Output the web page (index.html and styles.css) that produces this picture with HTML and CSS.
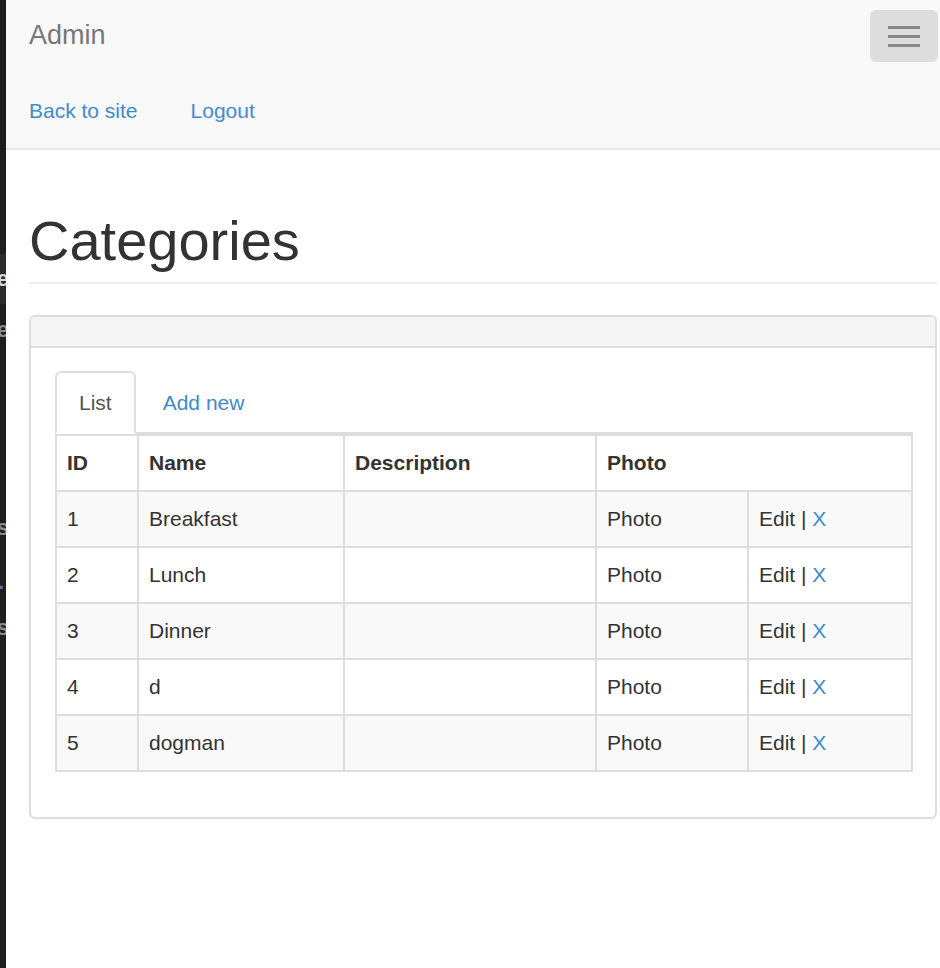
FILE: index.html
```html
<!DOCTYPE html>
<html lang="en">
<head>
<meta charset="utf-8">
<title>Admin - Categories</title>
<link rel="stylesheet" href="styles.css">
</head>
<body>
<div class="strip">
  <div class="strip-band"><span class="strip-char strip-char-light">re</span></div>
  <span class="strip-char strip-e2">re</span>
  <span class="strip-char strip-s1">es</span>
  <span class="strip-char strip-dot">.</span>
  <span class="strip-char strip-s2">es</span>
</div>
<div class="main">
  <nav class="navbar">
    <div class="navbar-header">
      <a class="brand" href="#">Admin</a>
      <button class="toggle" type="button" aria-label="Toggle navigation">
        <span class="bar"></span>
        <span class="bar"></span>
        <span class="bar"></span>
      </button>
    </div>
    <ul class="nav-links">
      <li><a href="#">Back to site</a></li>
      <li><a href="#">Logout</a></li>
    </ul>
  </nav>

  <div class="content">
    <h1 class="page-header">Categories</h1>

    <div class="panel">
      <div class="panel-heading"></div>
      <div class="panel-body">
        <ul class="tabs">
          <li class="active"><a href="#">List</a></li>
          <li><a href="#">Add new</a></li>
        </ul>
        <table class="grid">
          <colgroup>
            <col class="c-id">
            <col class="c-name">
            <col class="c-desc">
            <col class="c-photo">
            <col class="c-act">
          </colgroup>
          <thead>
            <tr><th>ID</th><th>Name</th><th>Description</th><th colspan="2">Photo</th></tr>
          </thead>
          <tbody>
            <tr><td>1</td><td>Breakfast</td><td></td><td>Photo</td><td>Edit | <a href="#">X</a></td></tr>
            <tr><td>2</td><td>Lunch</td><td></td><td>Photo</td><td>Edit | <a href="#">X</a></td></tr>
            <tr><td>3</td><td>Dinner</td><td></td><td>Photo</td><td>Edit | <a href="#">X</a></td></tr>
            <tr><td>4</td><td>d</td><td></td><td>Photo</td><td>Edit | <a href="#">X</a></td></tr>
            <tr><td>5</td><td>dogman</td><td></td><td>Photo</td><td>Edit | <a href="#">X</a></td></tr>
          </tbody>
        </table>
      </div>
    </div>
  </div>
</div>
</body>
</html>
```

FILE: styles.css
```css
* { box-sizing: border-box; }

html, body {
  margin: 0;
  padding: 0;
}

body {
  display: flex;
  min-height: 968px;
  font-family: "Liberation Sans", Arial, Helvetica, sans-serif;
  color: #333;
  background: #fff;
}

/* dark strip of a neighbouring window on the far left */
.strip {
  flex: none;
  width: 6px;
  background: #1e1e1e;
  overflow: hidden;
  display: flex;
  flex-direction: column;
  align-items: flex-end;
}

.strip-band {
  margin-top: 254px;
  width: 6px;
  height: 50px;
  background: #2c2c2c;
  display: flex;
  align-items: center;
  justify-content: flex-end;
  overflow: hidden;
}

.strip-char {
  flex: none;
  font-size: 22px;
  line-height: 24px;
  font-weight: bold;
  color: #8a8a8a;
  white-space: nowrap;
  margin-right: -3px;
}

.strip-char-light { color: #d8d8d8; }

.strip-e2 { margin-top: 14px; }
.strip-s1 { margin-top: 174px; }
.strip-dot { margin-top: 30px; color: #5a78a8; margin-right: 2px; }
.strip-s2 { margin-top: 22px; }

.main {
  flex: 1;
  min-width: 0;
}

/* navbar */
.navbar {
  background: #f8f8f8;
  border-bottom: 2px solid #e7e7e7;
}

.navbar-header {
  display: flex;
  justify-content: space-between;
  align-items: flex-start;
  height: 75px;
  padding-left: 23px;
  padding-right: 2px;
}

.brand {
  padding-top: 20px;
  font-size: 27px;
  line-height: 30px;
  color: #777;
  text-decoration: none;
}

.toggle {
  margin-top: 10px;
  width: 68px;
  height: 52px;
  padding: 0;
  border: none;
  border-radius: 6px;
  background: #ddd;
  display: flex;
  flex-direction: column;
  justify-content: center;
  align-items: center;
  gap: 6px;
}

.bar {
  display: block;
  width: 32px;
  height: 3px;
  background: #888;
}

.nav-links {
  list-style: none;
  margin: 0;
  padding: 21px 0 22px 23px;
  display: flex;
  gap: 53px;
}

.nav-links a {
  display: block;
  font-size: 21px;
  line-height: 30px;
  color: #428bca;
  text-decoration: none;
}

/* content */
.content {
  padding: 0 3px 0 23px;
}

.page-header {
  margin: 60px 0 31px;
  padding-bottom: 10px;
  border-bottom: 2px solid #eee;
  font-size: 56px;
  line-height: 62px;
  font-weight: normal;
  color: #333;
}

.panel {
  border: 2px solid #ddd;
  border-radius: 6px;
  background: #fff;
}

.panel-heading {
  height: 31px;
  background: #f5f5f5;
  border-bottom: 2px solid #ddd;
  border-radius: 4px 4px 0 0;
}

.panel-body {
  padding: 23px 22px 24px 24px;
}

/* tabs */
.tabs {
  list-style: none;
  margin: 0;
  padding: 0;
  display: flex;
  border-bottom: 2px solid #ddd;
}

.tabs li {
  margin-bottom: -2px;
  margin-right: 3px;
}

.tabs a {
  display: block;
  padding: 15px 22px 14px;
  font-size: 21px;
  line-height: 30px;
  color: #428bca;
  text-decoration: none;
  border: 2px solid transparent;
  border-radius: 6px 6px 0 0;
}

.tabs .active a {
  color: #555;
  background: #fff;
  border-color: #ddd #ddd transparent;
}

/* table */
.grid {
  width: 858px;
  table-layout: fixed;
  border-collapse: separate;
  border-spacing: 0;
  border-top: 2px solid #ddd;
  border-left: 2px solid #ddd;
  margin-bottom: 21px;
}

.c-id { width: 82px; }
.c-name { width: 206px; }
.c-desc { width: 252px; }
.c-photo { width: 152px; }
.c-act { width: 164px; }

.grid th,
.grid td {
  padding: 12px 10px;
  font-size: 21px;
  line-height: 30px;
  text-align: left;
  vertical-align: top;
  border-right: 2px solid #ddd;
  border-bottom: 2px solid #ddd;
  color: #333;
}

.grid th { font-weight: bold; }

.grid tbody tr:nth-child(odd) td { background: #f9f9f9; }

.grid td a {
  color: #428bca;
  text-decoration: none;
}
```
